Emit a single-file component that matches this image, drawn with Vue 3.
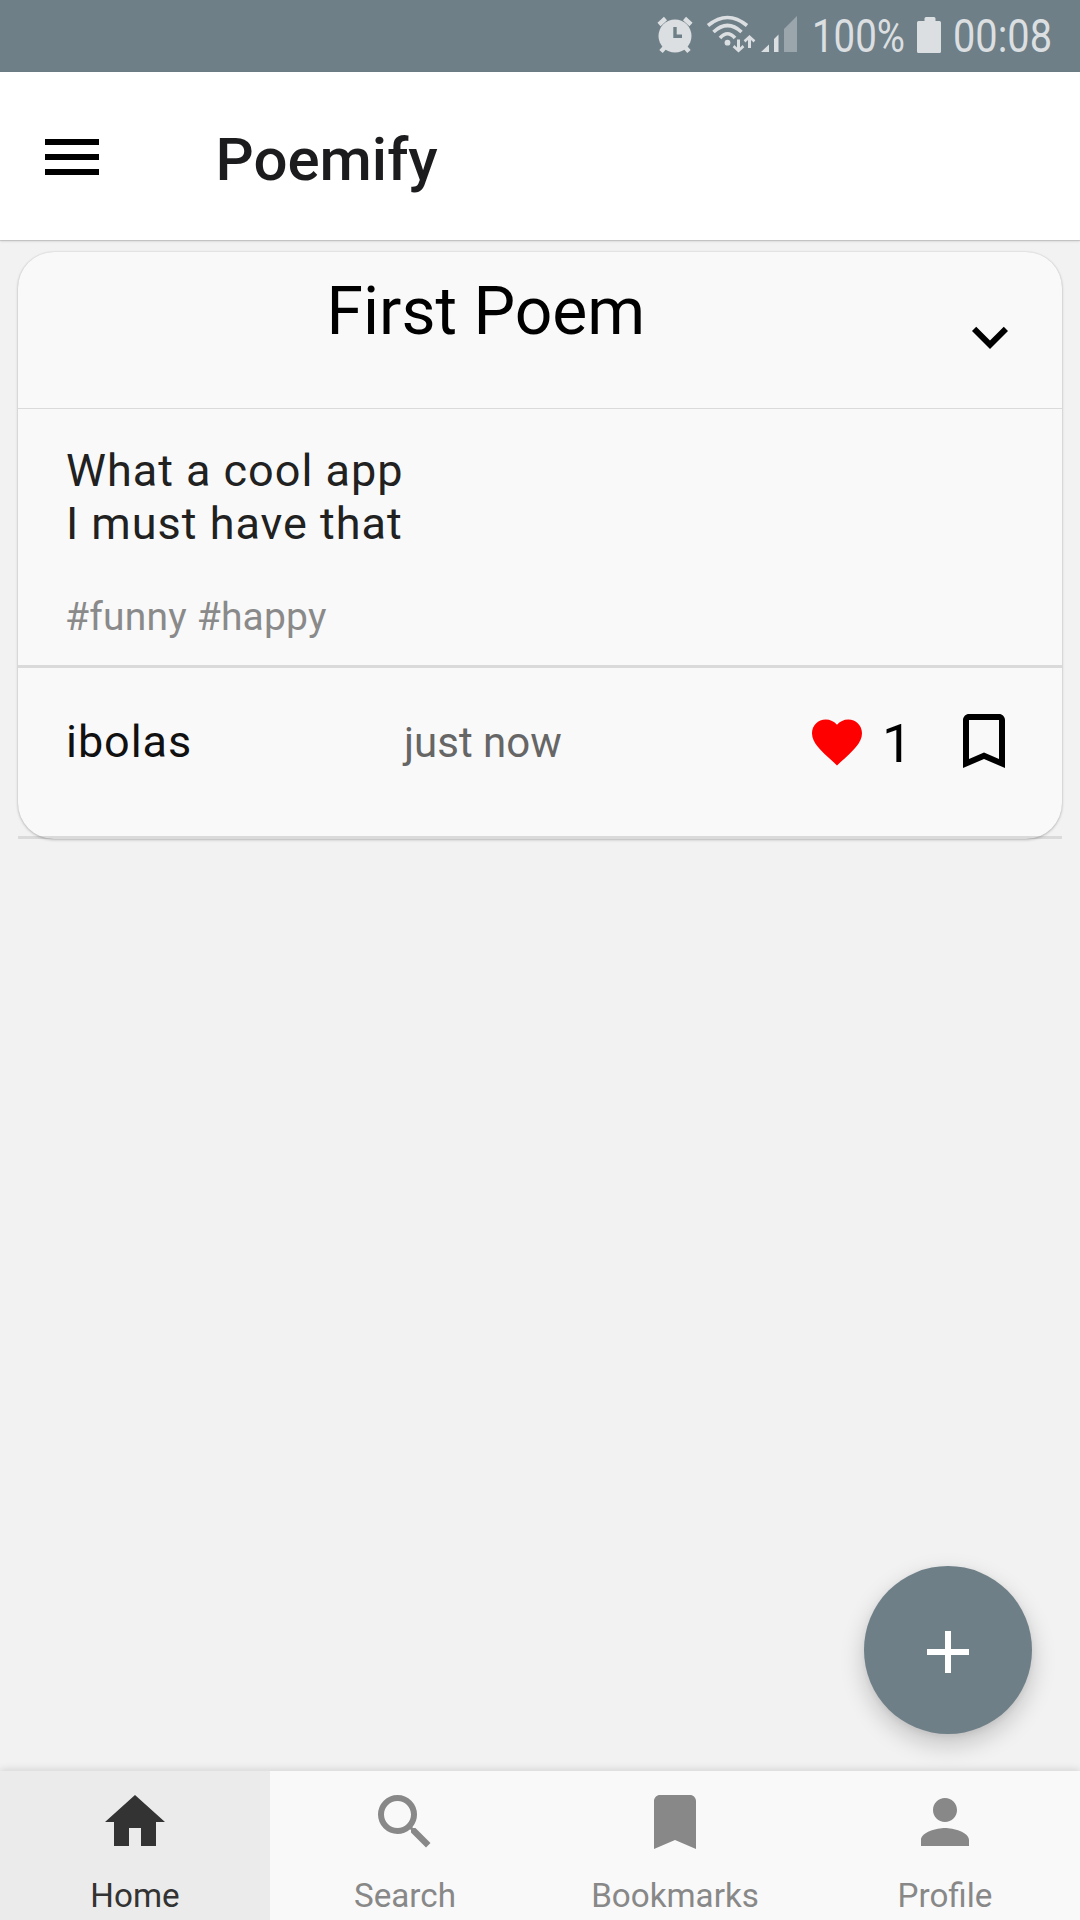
<script setup>
const tabs = [
  { label: 'Home', active: true, path: 'M10 20v-6h4v6h5v-8h3L12 3 2 12h3v8z' },
  {
    label: 'Search',
    path: 'M15.5 14h-.79l-.28-.27A6.471 6.471 0 0 0 16 9.5 6.5 6.5 0 1 0 9.5 16c1.61 0 3.09-.59 4.23-1.57l.27.28v.79l5 4.99L20.49 19l-4.99-5zm-6 0C7.01 14 5 11.99 5 9.5S7.01 5 9.5 5 14 7.01 14 9.5 11.99 14 9.5 14z',
  },
  { label: 'Bookmarks', path: 'M17 3H7c-1.1 0-2 .9-2 2v16l7-3 7 3V5c0-1.1-.9-2-2-2z' },
  {
    label: 'Profile',
    path: 'M12 12c2.21 0 4-1.79 4-4s-1.79-4-4-4-4 1.79-4 4 1.79 4 4 4zm0 2c-2.67 0-8 1.34-8 4v2h16v-2c0-2.66-5.33-4-8-4z',
  },
]
</script>

<template>
  <div class="screen">
    <div class="status">
      <svg class="status-icons" width="423" height="72" viewBox="0 0 423 72">
        <g fill="#dbdfe1">
          <circle cx="18" cy="36" r="16.5" />
          <g stroke="#dbdfe1" stroke-width="4.6" fill="none">
            <path d="M2 24.5L8.5 18.5M34 24.5L27.5 18.5M4 51.5L9 46M32 51.5L27 46" />
          </g>
          <path d="M18 27v9.2h7" fill="none" stroke="#6e7f87" stroke-width="3.4" />
          <g fill="none" stroke="#dbdfe1" stroke-width="3.6">
            <path d="M51 25.5Q70.500 9.500 90 25.500" />
            <path d="M56.500 32Q70.500 19 84.500 32" />
            <path d="M63 38Q70.500 29.500 78 38" />
          </g>
          <circle cx="70.500" cy="42.700" r="2.900" />
          <path d="M80 39.500h3v8l2.600-2.400 1.700 2.100-5.800 5.300-5.800-5.300 1.700-2.100 2.600 2.400z" />
          <path d="M91 48v-8l-2.600 2.400-1.700-2.100 5.800-5.300 5.800 5.300-1.700 2.100-2.600-2.400v8z" />
          <path d="M104 52h8v-7.500zM117 52h4.500V34.500L117 39z" />
          <path d="M127 52h13V16l-13 13z" fill="#9ba6ac" />
          <text x="155" y="52" textLength="93" lengthAdjust="spacingAndGlyphs">100%</text>
          <path d="M269 17h8q1.500 0 1.500 1.500V21h4q1.500 0 1.500 1.500v29q0 1.500-1.500 1.500h-21q-1.500 0-1.500-1.500v-29q0-1.500 1.500-1.500h6v-2.500q0-1.500 1.500-1.500z" />
          <text x="296" y="52" textLength="99" lengthAdjust="spacingAndGlyphs">00:08</text>
        </g>
      </svg>
    </div>

    <header class="appbar">
      <svg class="menu" width="54" height="36" viewBox="0 0 54 36">
        <path d="M0 0h54v6H0zM0 15h54v6H0zM0 30h54v6H0z" />
      </svg>
      <h1>Poemify</h1>
    </header>

    <main class="feed">
      <article class="card">
        <div class="card-head">
          <h2>First Poem</h2>
          <svg class="chevron" width="72" height="72" viewBox="0 0 24 24">
            <path d="M7.410 8.590L12 13.170l4.590-4.580L18 10l-6 6-6-6z" />
          </svg>
        </div>
        <div class="card-body">
          <p class="poem">What a cool app<br />I must have that</p>
          <p class="tags">#funny #happy</p>
        </div>
        <div class="card-foot">
          <span class="author">ibolas</span>
          <span class="time">just now</span>
          <svg class="heart" width="60" height="60" viewBox="0 0 24 24">
            <path
              fill="#f00"
              d="M12 21.350l-1.450-1.320C5.400 15.360 2 12.280 2 8.500 2 5.420 4.420 3 7.500 3c1.740 0 3.410.81 4.500 2.090C13.090 3.810 14.760 3 16.500 3 19.580 3 22 5.420 22 8.500c0 3.780-3.400 6.860-8.550 11.540L12 21.350z"
            />
          </svg>
          <span class="likes">1</span>
          <svg class="save" width="72" height="72" viewBox="0 0 24 24">
            <path d="M17 3H7c-1.100 0-2 .9-2 2v16l7-3 7 3V5c0-1.100-.9-2-2-2zm0 15l-5-2.180L7 18V5h10v13z" />
          </svg>
        </div>
      </article>
    </main>

    <button class="fab">
      <svg width="72" height="72" viewBox="0 0 24 24"><path fill="#fff" d="M19 13h-6v6h-2v-6H5v-2h6V5h2v6h6v2z" /></svg>
    </button>

    <nav class="tabs">
      <div v-for="tab in tabs" :key="tab.label" class="tab" :class="{ active: tab.active }">
        <svg width="72" height="72" viewBox="0 0 24 24"><path :d="tab.path" fill="currentColor" /></svg>
        <span>{{ tab.label }}</span>
      </div>
    </nav>
  </div>
</template>

<style>
body {
  margin: 0;
}
</style>

<style scoped>
.screen {
  position: relative;
  display: flex;
  flex-direction: column;
  width: 1080px;
  height: 1920px;
  overflow: hidden;
  background: #f2f2f2;
  font-family: Roboto, 'Liberation Sans', sans-serif;
  color: #000;
}
svg {
  display: block;
  flex: none;
}
h1,
h2,
p {
  margin: 0;
  font-weight: 400;
}
.status {
  display: flex;
  justify-content: flex-end;
  height: 72px;
  background: #6e7f87;
}
.status-icons text {
  font-size: 46px;
}
.appbar {
  display: flex;
  align-items: center;
  height: 168px;
  padding-left: 45px;
  background: #fff;
  box-shadow: 0 1px 1px rgba(0, 0, 0, 0.13), 0 1px 3px rgba(0, 0, 0, 0.12);
}
.menu {
  margin-top: 2px;
}
.appbar h1 {
  margin: 7px 0 0 116.5px;
  font-size: 60px;
  line-height: 60px;
  font-weight: 500;
  color: #1c1c1e;
}
.feed {
  flex: 1;
  padding: 12px 18px 0;
}
.card {
  position: relative;
  height: 587px;
  border-radius: 36px;
  background: #f9f9f9;
}
/* Elevation sits above the footer rule, which runs past the rounded corners. */
.card::after {
  content: '';
  position: absolute;
  inset: 0;
  border-radius: 36px;
  box-shadow: 0 1px 3px rgba(0, 0, 0, 0.22), 0 0 2px rgba(0, 0, 0, 0.12);
  pointer-events: none;
}
.card-head {
  display: flex;
  justify-content: space-between;
  box-sizing: border-box;
  height: 157px;
  padding: 20px 36px 0 308.5px;
  border-bottom: 1px solid #dadada;
}
.card-head h2 {
  font-size: 66px;
  line-height: 80px;
}
.chevron {
  margin-top: 29px;
}
.card-body {
  box-sizing: border-box;
  height: 259px;
  padding: 35px 48px 0;
  border-bottom: 3px solid #dadada;
}
.poem {
  font-size: 45px;
  line-height: 53px;
  letter-spacing: 0.98px;
  color: #212121;
}
.tags {
  margin: 44px 0 0 -1px;
  font-size: 39px;
  line-height: 46px;
  letter-spacing: 0.2px;
  color: #8a8a8a;
}
.card-foot {
  display: flex;
  box-sizing: border-box;
  height: 171px;
  padding-left: 48px;
  border-bottom: 3px solid #dadada;
}
.author {
  width: 338px;
  margin-top: 48px;
  font-size: 45px;
  line-height: 52px;
  letter-spacing: 0.95px;
  color: #111;
}
.time {
  width: 403px;
  margin-top: 49px;
  font-size: 42px;
  line-height: 52px;
  color: #666;
}
.heart {
  margin-top: 43.5px;
}
.likes {
  width: 66px;
  margin: 46px 0 0 15px;
  font-size: 54px;
  line-height: 60px;
}
.save {
  margin-top: 37px;
}
.fab {
  position: absolute;
  left: 864px;
  top: 1566px;
  display: flex;
  align-items: center;
  justify-content: center;
  width: 168px;
  height: 168px;
  padding: 4px 0 0;
  border: 0;
  border-radius: 50%;
  background: #6e7f87;
  box-shadow: 0 10px 24px rgba(0, 0, 0, 0.2), 0 2px 6px rgba(0, 0, 0, 0.06);
}
.tabs {
  display: flex;
  height: 149px;
  background: #f9f9f9;
  box-shadow: 0 -1px 8px rgba(0, 0, 0, 0.14);
}
.tab {
  display: flex;
  flex: 1;
  flex-direction: column;
  align-items: center;
  padding-top: 15px;
  color: #888;
}
.tab.active {
  background: #ebebeb;
  color: #333;
}
.tab span {
  margin-top: 18px;
  font-size: 33.2px;
  line-height: 40px;
}
</style>
